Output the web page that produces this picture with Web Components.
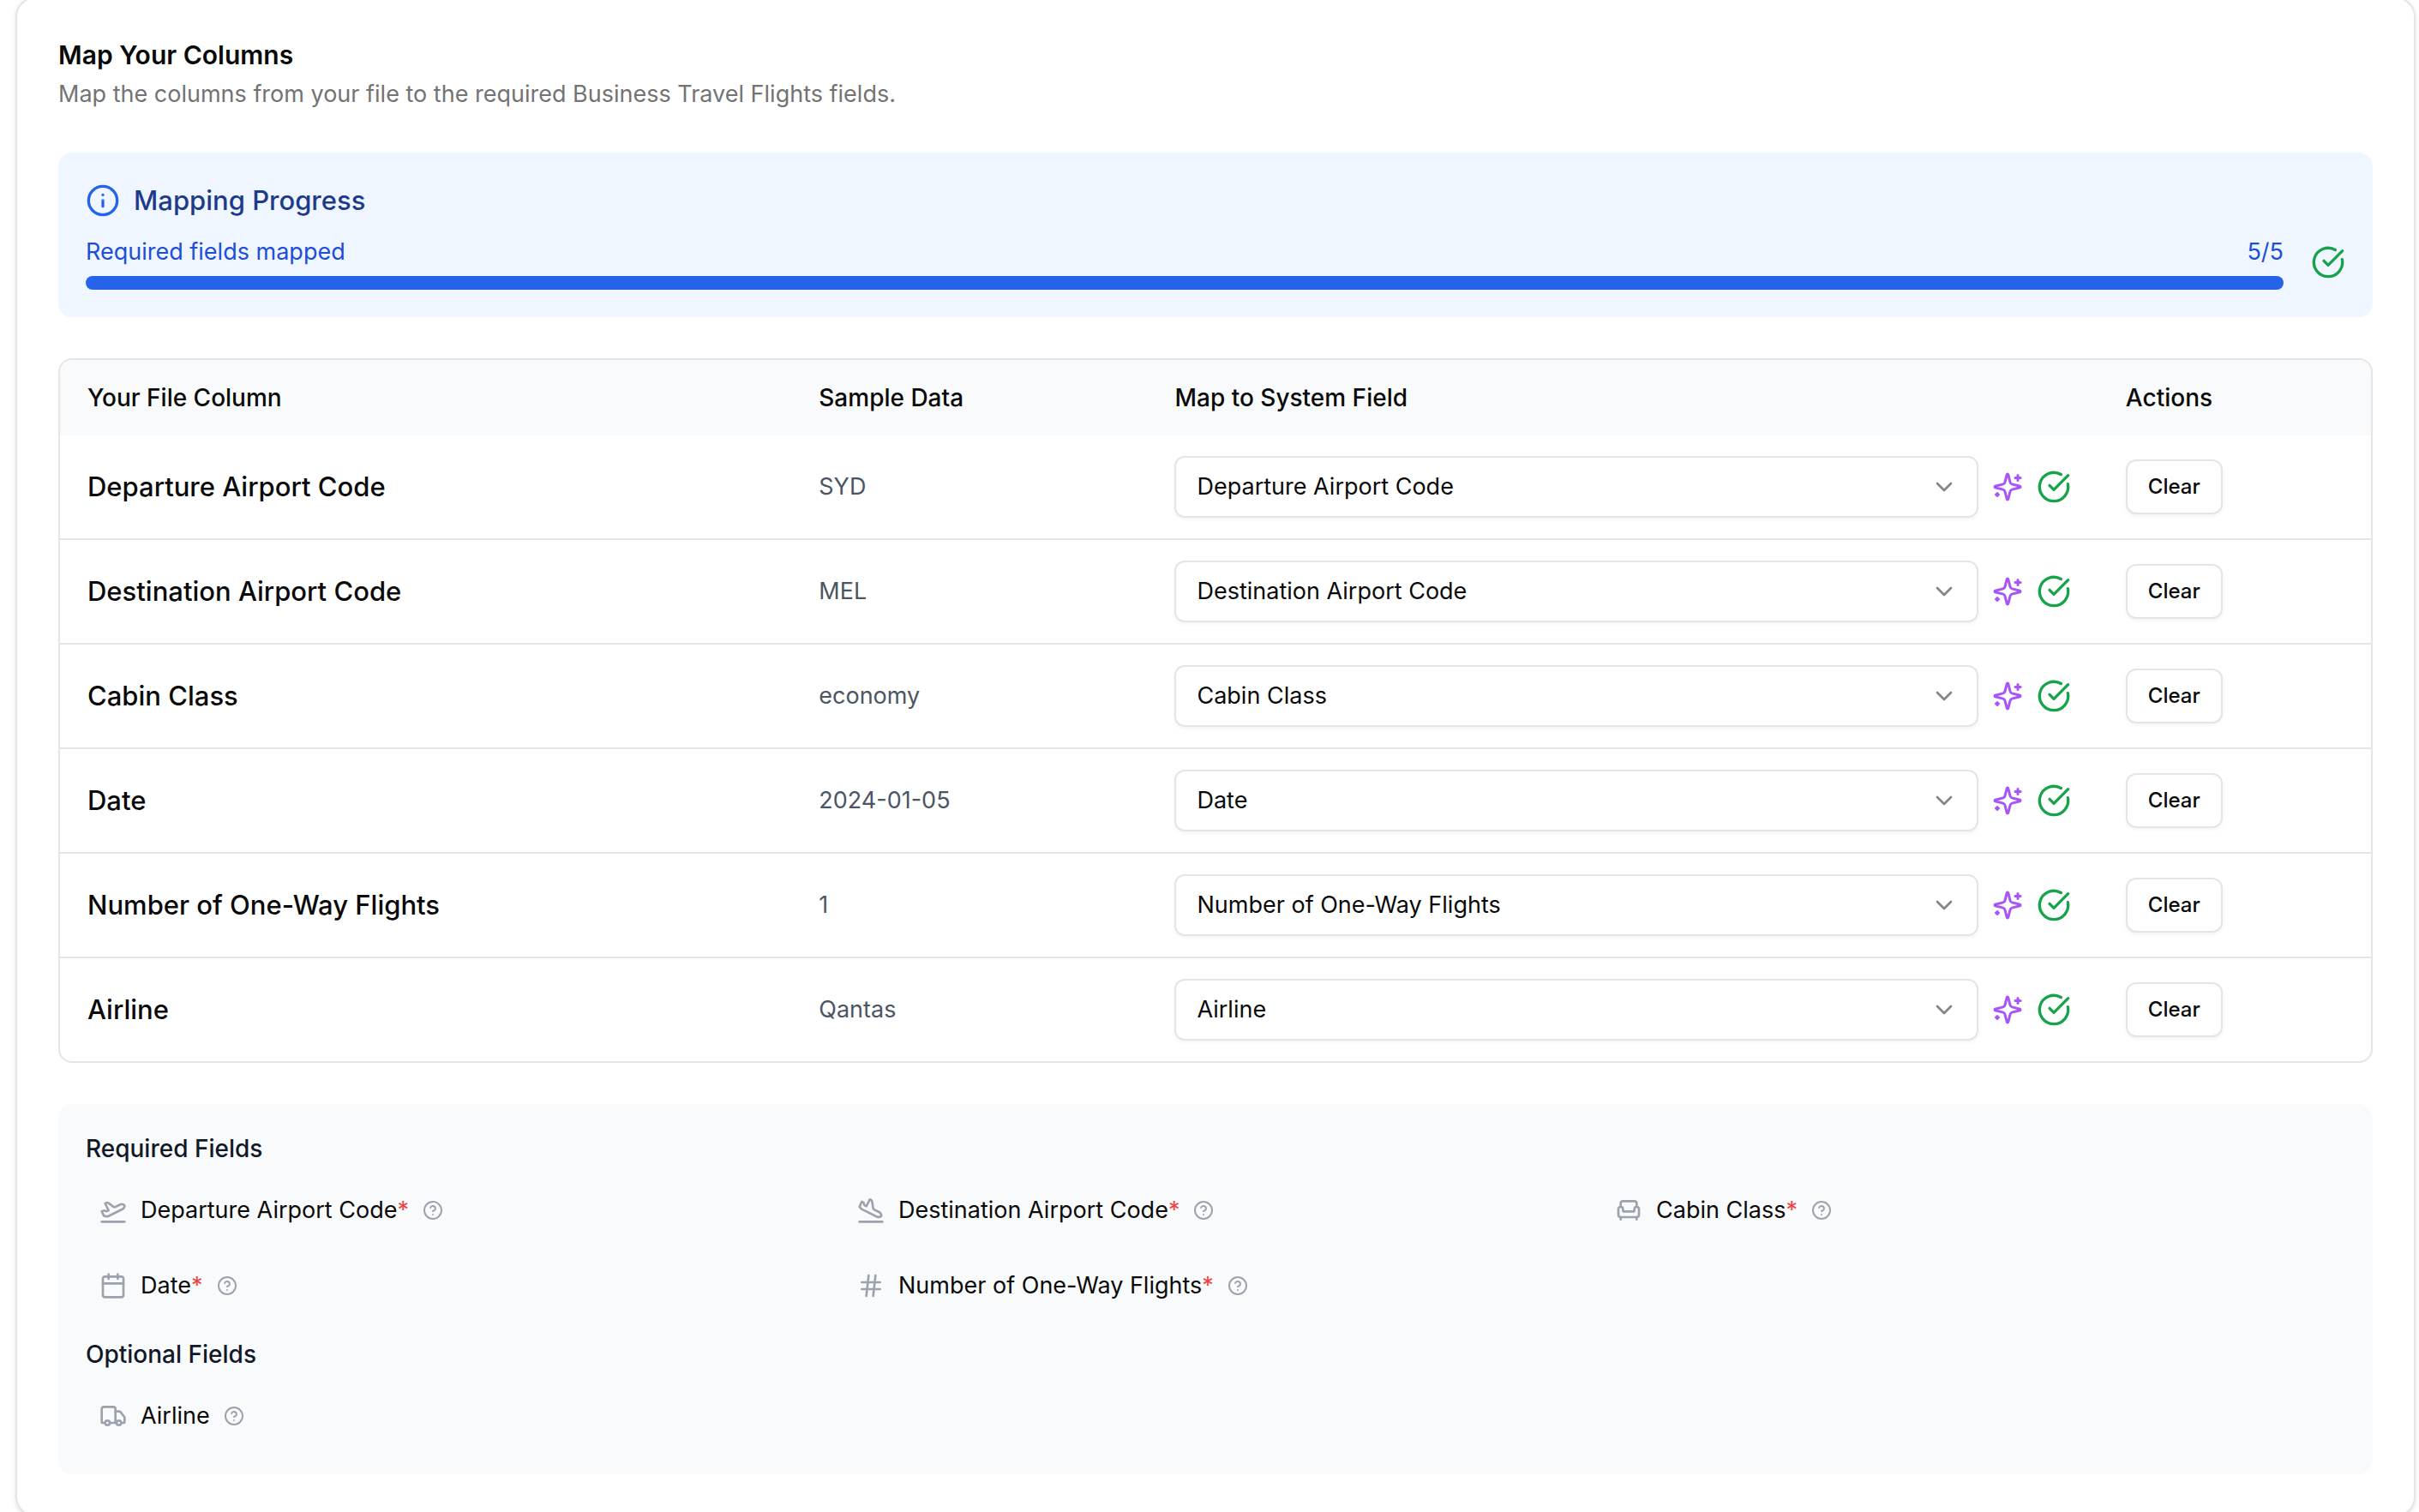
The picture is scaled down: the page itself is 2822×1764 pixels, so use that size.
<!DOCTYPE html>
<html lang="en">
<head>
<meta charset="utf-8">
<title>Map Your Columns</title>
<style>
  body {
    margin: 0;
    padding: 0 4px 0 18px;
    overflow: hidden;
    background: #fff;
    color: #0a0a0a;
    font-family: Inter, "Liberation Sans", sans-serif;
    font-size: 27px;
    line-height: 40px;
  }
</style>
</head>
<body>

<uc-card>
  <span slot="title">Map Your Columns</span>
  <span slot="description">Map the columns from your file to the required Business Travel Flights fields.</span>
  <uc-mapping-progress mapped="5" total="5"></uc-mapping-progress>
  <uc-mapping-table></uc-mapping-table>
  <uc-field-legend></uc-field-legend>
</uc-card>

<script>
const FIELDS = [
  {name: 'Departure Airport Code', sample: 'SYD', icon: 'plane-takeoff', required: true},
  {name: 'Destination Airport Code', sample: 'MEL', icon: 'plane-landing', required: true},
  {name: 'Cabin Class', sample: 'economy', icon: 'armchair', required: true},
  {name: 'Date', sample: '2024-01-05', icon: 'calendar', required: true},
  {name: 'Number of One-Way Flights', sample: '1', icon: 'hash', required: true},
  {name: 'Airline', sample: 'Qantas', icon: 'truck', required: false}
];

// 24x24 stroke icons
const ICONS = {
  'info': '<circle cx="12" cy="12" r="10"/><path d="M12 16v-4"/><path d="M12 8h.01"/>',
  'check': '<path d="M21.801 10A10 10 0 1 1 17 3.335"/><path d="m9 11 3 3L22 4"/>',
  'sparkles': '<path d="M9.937 15.5A2 2 0 0 0 8.5 14.063l-6.135-1.582a.5.5 0 0 1 0-.962L8.5 9.936A2 2 0 0 0 9.937 8.5l1.582-6.135a.5.5 0 0 1 .963 0L14.063 8.5A2 2 0 0 0 15.5 9.937l6.135 1.581a.5.5 0 0 1 0 .964L15.5 14.063a2 2 0 0 0-1.437 1.437l-1.582 6.135a.5.5 0 0 1-.963 0z"/><path d="M20 3v4"/><path d="M22 5h-4"/><path d="M4 17v2"/><path d="M5 18H3"/>',
  'chevron': '<path d="m6 9 6 6 6-6"/>',
  'help': '<circle cx="12" cy="12" r="10"/><path d="M9.09 9a3 3 0 0 1 5.83 1c0 2-3 3-3 3"/><path d="M12 17h.01"/>',
  'plane-takeoff': '<path d="M2 22h20"/><path d="M6.36 17.4 4 17l-2-4 1.1-.55a2 2 0 0 1 1.8 0l.17.1a2 2 0 0 0 1.8 0L8 12 5 6l.9-.45a2 2 0 0 1 2.09.2l4.02 3a2 2 0 0 0 2.1.2l4.19-2.06a2.41 2.41 0 0 1 1.73-.17L21 7a1.4 1.4 0 0 1 .87 1.99l-.38.76c-.23.46-.6.84-1.07 1.08L7.58 17.2a2 2 0 0 1-1.22.18Z"/>',
  'plane-landing': '<path d="M2 22h20"/><path d="M3.77 10.77 2 9l2-4.5 1.1.55c.55.28.9.84.9 1.45s.35 1.17.9 1.45L8 8.5l3-6 1.05.53a2 2 0 0 1 1.09 1.52l.72 5.4a2 2 0 0 0 1.09 1.52l4.4 2.2c.42.22.78.55 1.01.96l.6 1.03c.49.88-.06 1.98-1.06 2.1l-1.18.15c-.47.06-.95-.02-1.37-.24L4.29 11.15a2 2 0 0 1-.52-.38Z"/>',
  'armchair': '<path d="M19 9V6a2 2 0 0 0-2-2H7a2 2 0 0 0-2 2v3"/><path d="M3 16a2 2 0 0 0 2 2h14a2 2 0 0 0 2-2v-5a2 2 0 0 0-4 0v1.5a.5.5 0 0 1-.5.5h-9a.5.5 0 0 1-.5-.5V11a2 2 0 0 0-4 0z"/><path d="M5 18v2"/><path d="M19 18v2"/>',
  'calendar': '<path d="M8 2v4"/><path d="M16 2v4"/><rect width="18" height="18" x="3" y="4" rx="2"/><path d="M3 10h18"/>',
  'hash': '<path d="M4 9h16"/><path d="M4 15h16"/><path d="M10 3 8 21"/><path d="M16 3l-2 18"/>',
  'truck': '<path d="M14 18V6a2 2 0 0 0-2-2H4a2 2 0 0 0-2 2v11a1 1 0 0 0 1 1h2"/><path d="M15 18H9"/><path d="M19 18h2a1 1 0 0 0 1-1v-3.65a1 1 0 0 0-.22-.624l-3.48-4.35A1 1 0 0 0 17.52 8H14"/><circle cx="17" cy="18" r="2"/><circle cx="7" cy="18" r="2"/>'
};

class Icon extends HTMLElement {
  constructor() {
    super();
    this.attachShadow({mode: 'open'});
  }

  connectedCallback() {
    this.shadowRoot.innerHTML = `
      <style>
        :host {
          display: block;
          flex: none;
          width: var(--icon-size, 32px);
          height: var(--icon-size, 32px);
        }
        svg {
          display: block;
          width: 100%;
          height: 100%;
          fill: none;
          stroke: currentColor;
          stroke-width: 2;
          stroke-linecap: round;
          stroke-linejoin: round;
        }
      </style>
      <svg viewBox="0 0 24 24" aria-hidden="true">${ICONS[this.getAttribute('name')]}</svg>`;
  }
}

class Card extends HTMLElement {
  constructor() {
    super();
    this.attachShadow({mode: 'open'});
    this.shadowRoot.innerHTML = `
      <style>
        :host {
          display: block;
          margin-top: -4px;
          padding: 48px;
          border: 2px solid #e5e5e5;
          border-radius: 24px;
          background: #fff;
          box-shadow: 0 2px 6px rgba(0, 0, 0, 0.1);
        }
        header {
          display: grid;
          gap: 8px;
          margin-bottom: 48px;
        }
        h2, p { margin: 0; }
        h2 {
          font-size: 30px;
          font-weight: 600;
          line-height: 36px;
        }
        p { color: #737373; }
        .content {
          display: grid;
          gap: 48px;
        }
      </style>
      <header>
        <h2><slot name="title"></slot></h2>
        <p><slot name="description"></slot></p>
      </header>
      <div class="content"><slot></slot></div>`;
  }
}

class MappingProgress extends HTMLElement {
  constructor() {
    super();
    this.attachShadow({mode: 'open'});
  }

  connectedCallback() {
    const mapped = this.getAttribute('mapped');
    const total = this.getAttribute('total');
    this.shadowRoot.innerHTML = `
      <style>
        :host {
          --icon-size: 40px;
          display: block;
          padding: 32px;
          border-radius: 16px;
          background: #eff6ff;
          color: #1d4ed8;
        }
        .heading {
          display: flex;
          align-items: center;
          gap: 16px;
          margin-bottom: 16px;
        }
        .heading uc-icon { color: #2563eb; }
        h3 {
          margin: 0;
          color: #1e3a8a;
          font-size: 31px;
          font-weight: 500;
          line-height: 48px;
        }
        .status {
          display: flex;
          align-items: center;
          gap: 32px;
        }
        .status > uc-icon { color: #16a34a; }
        .meter { flex: 1; }
        .labels {
          display: flex;
          justify-content: space-between;
          margin-bottom: 8px;
        }
        progress {
          display: block;
          width: 100%;
          height: 16px;
          border: 0;
          border-radius: 8px;
          overflow: hidden;
          appearance: none;
        }
        progress::-webkit-progress-bar { background: #bfdbfe; }
        progress::-webkit-progress-value { background: #2563eb; }
      </style>
      <div class="heading">
        <uc-icon name="info"></uc-icon>
        <h3>Mapping Progress</h3>
      </div>
      <div class="status">
        <div class="meter">
          <div class="labels">
            <label for="bar">Required fields mapped</label>
            <span>${mapped}/${total}</span>
          </div>
          <progress id="bar" value="${mapped}" max="${total}"></progress>
        </div>
        <uc-icon name="check"></uc-icon>
      </div>`;
  }
}

class FieldSelect extends HTMLElement {
  constructor() {
    super();
    this.attachShadow({mode: 'open'});
  }

  connectedCallback() {
    const value = this.getAttribute('value');
    const options = FIELDS.map(f =>
      `<option${f.name === value ? ' selected' : ''}>${f.name}</option>`).join('');
    this.shadowRoot.innerHTML = `
      <style>
        :host {
          display: grid;
          align-items: center;
          flex: 1;
        }
        select, uc-icon { grid-area: 1 / 1; }
        select {
          width: 100%;
          height: 72px;
          padding: 0 64px 0 24px;
          border: 2px solid #e5e5e5;
          border-radius: 12px;
          background: transparent;
          box-shadow: 0 2px 4px rgba(0, 0, 0, 0.05);
          color: inherit;
          font: inherit;
          appearance: none;
        }
        uc-icon {
          justify-self: end;
          margin-right: 24px;
          color: #858585;
          pointer-events: none;
        }
      </style>
      <select aria-label="System field for ${value}">${options}</select>
      <uc-icon name="chevron"></uc-icon>`;
  }

  clear() {
    this.shadowRoot.querySelector('select').selectedIndex = -1;
  }
}

class MappingTable extends HTMLElement {
  constructor() {
    super();
    this.attachShadow({mode: 'open'});
    const rows = FIELDS.map(f => `
      <tr>
        <th scope="row">${f.name}</th>
        <td class="sample">${f.sample}</td>
        <td>
          <div class="mapping">
            <uc-field-select value="${f.name}"></uc-field-select>
            <uc-icon class="auto" name="sparkles"></uc-icon>
            <uc-icon class="done" name="check"></uc-icon>
          </div>
        </td>
        <td><button type="button">Clear</button></td>
      </tr>`).join('');
    this.shadowRoot.innerHTML = `
      <style>
        :host {
          display: block;
          border: 2px solid #e5e5e5;
          border-radius: 16px;
          overflow: hidden;
        }
        table {
          width: 100%;
          border-collapse: separate;
          border-spacing: 0;
          table-layout: fixed;
        }
        .col-file { width: 31.65%; }
        .col-sample { width: 15.4%; }
        .col-field { width: 41.15%; }
        th, td {
          padding: 24px 32px;
          font-weight: 400;
          text-align: left;
          vertical-align: middle;
        }
        thead th {
          background: #f9fafb;
          font-size: 28px;
          font-weight: 500;
        }
        tbody th {
          font-size: 31px;
          font-weight: 500;
        }
        tbody tr:not(:last-child) > * { border-bottom: 2px solid #e5e5e5; }
        .sample { color: #4b5563; }
        .mapping {
          display: flex;
          align-items: center;
          gap: 16px;
        }
        .auto { --icon-size: 36px; color: #a855f7; }
        .done { --icon-size: 40px; color: #16a34a; }
        button {
          display: block;
          height: 64px;
          padding: 0 24px;
          border: 2px solid #e5e5e5;
          border-radius: 12px;
          background: #fff;
          box-shadow: 0 2px 4px rgba(0, 0, 0, 0.05);
          color: inherit;
          font: inherit;
          font-size: 24px;
          font-weight: 500;
        }
      </style>
      <table>
        <colgroup>
          <col class="col-file"><col class="col-sample"><col class="col-field"><col>
        </colgroup>
        <thead>
          <tr>
            <th scope="col">Your File Column</th>
            <th scope="col">Sample Data</th>
            <th scope="col">Map to System Field</th>
            <th scope="col">Actions</th>
          </tr>
        </thead>
        <tbody>${rows}</tbody>
      </table>`;
  }

  connectedCallback() {
    this.shadowRoot.addEventListener('click', this._clearRow);
  }

  _clearRow(event) {
    const button = event.target.closest('button');
    if (button) {
      button.closest('tr').querySelector('uc-field-select').clear();
    }
  }
}

class FieldItem extends HTMLElement {
  constructor() {
    super();
    this.attachShadow({mode: 'open'});
  }

  connectedCallback() {
    const mark = this.hasAttribute('required') ? '<span class="mark">*</span>' : '';
    this.shadowRoot.innerHTML = `
      <style>
        :host {
          display: flex;
          align-items: center;
          gap: 16px;
          padding: 16px;
        }
        uc-icon { color: #9ca3af; }
        .mark { color: #ef4444; }
        button {
          --icon-size: 24px;
          padding: 0;
          border: 0;
          background: none;
        }
      </style>
      <uc-icon name="${this.getAttribute('icon')}"></uc-icon>
      <span><slot></slot>${mark}</span>
      <button type="button" aria-label="Help"><uc-icon name="help"></uc-icon></button>`;
  }
}

class FieldLegend extends HTMLElement {
  constructor() {
    super();
    this.attachShadow({mode: 'open'});
    this.shadowRoot.innerHTML = `
      <style>
        :host {
          display: grid;
          gap: 24px;
          padding: 32px;
          border-radius: 16px;
          background: #f9fafb;
        }
        h4 {
          margin: 0 0 16px;
          color: #111827;
          font-size: 28px;
          font-weight: 500;
        }
        .items {
          display: grid;
          grid-template-columns: repeat(3, 1fr);
          gap: 16px;
        }
      </style>
      <section>
        <h4>Required Fields</h4>
        <div class="items">${this._items(true)}</div>
      </section>
      <section>
        <h4>Optional Fields</h4>
        <div class="items">${this._items(false)}</div>
      </section>`;
  }

  _items(required) {
    return FIELDS.filter(f => f.required === required).map(f =>
      `<uc-field-item icon="${f.icon}"${required ? ' required' : ''}>${f.name}</uc-field-item>`).join('');
  }
}

customElements.define('uc-icon', Icon);
customElements.define('uc-card', Card);
customElements.define('uc-mapping-progress', MappingProgress);
customElements.define('uc-field-select', FieldSelect);
customElements.define('uc-mapping-table', MappingTable);
customElements.define('uc-field-item', FieldItem);
customElements.define('uc-field-legend', FieldLegend);
</script>
</body>
</html>
